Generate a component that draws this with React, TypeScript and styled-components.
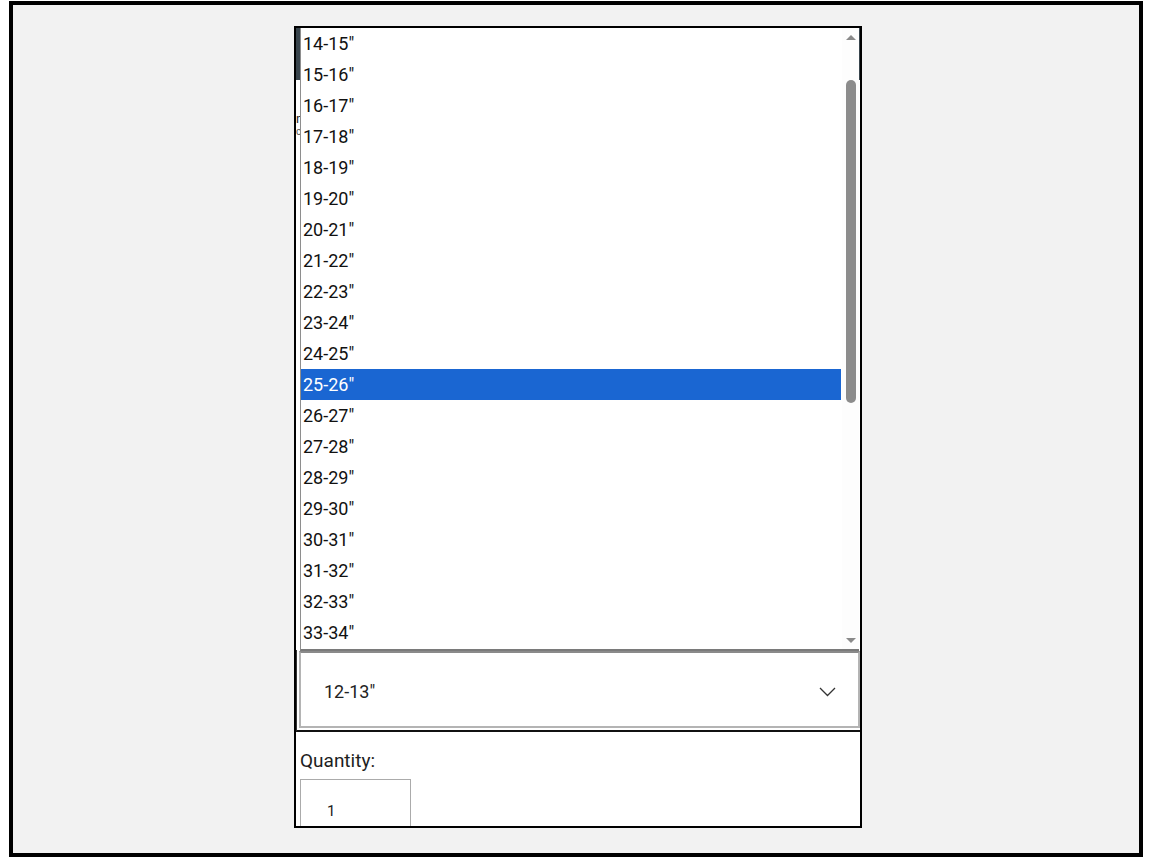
import React from 'react'
import styled, { createGlobalStyle } from 'styled-components'

const GlobalStyle = createGlobalStyle`
  html, body {
    margin: 0;
    padding: 0;
    background: #ffffff;
  }
  body {
    font-family: Roboto, "Noto Sans", "Liberation Sans", sans-serif;
    color: #111;
  }
`

const Screen = styled.div`
  width: 1152px;
  height: 864px;
  padding: 1px 0 0 9px;
  box-sizing: border-box;
`

const Frame = styled.div`
  width: 1134px;
  height: 856px;
  box-sizing: border-box;
  border: 4px solid #000;
  background: #f2f2f2;
  padding: 21px 0 0 281px;
`

const Phone = styled.div`
  position: relative;
  width: 568px;
  height: 802px;
  box-sizing: border-box;
  border: 2px solid #000;
  background: #fff;
  overflow: hidden;
  display: flex;
  flex-direction: column;
`

const Backdrop = styled.div`
  height: 622px;
  flex: none;
  display: flex;
  flex-direction: column;
`

const ProductImage = styled.div`
  height: 52px;
  background: #38444c;
`

const Title = styled.div`
  margin-top: 34px;
  font-size: 13px;
  line-height: 10px;
  color: #222;
`

const Sub = styled.div`
  margin-top: 3px;
  font-size: 10px;
  line-height: 9px;
  color: #555;
`

const ListBox = styled.div`
  position: absolute;
  top: 0;
  left: 4px;
  width: 559px;
  height: 623px;
  box-sizing: border-box;
  background: #fff;
  border-left: 1px solid #8e8e8e;
  border-bottom: 2px solid #7a7a7a;
  display: flex;
  overflow: hidden;
`

const Options = styled.ul`
  list-style: none;
  margin: 0;
  padding: 0;
  flex: 1;
`

const Option = styled.li<{ $selected?: boolean }>`
  height: 31px;
  line-height: 31px;
  padding-left: 2px;
  font-size: 18px;
  color: ${p => (p.$selected ? '#fff' : '#111')};
  background: ${p => (p.$selected ? '#1a66d2' : 'transparent')};
  white-space: nowrap;
`

const Track = styled.div`
  width: 17px;
  flex: none;
  display: flex;
  flex-direction: column;
  align-items: center;
  background: #fdfdfd;
  margin-left: 1px;
`

const ArrowBox = styled.div`
  height: 18px;
  width: 100%;
  display: flex;
  align-items: center;
  justify-content: center;
`

const Arrow = styled.div<{ $down?: boolean }>`
  width: 0;
  height: 0;
  border-left: 5px solid transparent;
  border-right: 5px solid transparent;
  ${p =>
    p.$down
      ? 'border-top: 5px solid #8a8a8a;'
      : 'border-bottom: 5px solid #8a8a8a;'}
`

const Thumb = styled.div`
  width: 10px;
  height: 323px;
  margin-top: 34px;
  border-radius: 5px;
  background: #8c8c8c;
`

const Spacer = styled.div`
  flex: 1;
`

const SelectWrap = styled.div`
  flex: none;
  border-left: 1px solid #333;
  border-bottom: 2px solid #111;
  padding: 1px 0 2px 2px;
`

const Select = styled.div`
  height: 77px;
  box-sizing: border-box;
  border: 2px solid #b4b4b4;
  border-top-color: #8a8a8a;
  display: flex;
  align-items: center;
  justify-content: space-between;
  padding: 4px 22px 0 23px;
  font-size: 18px;
  color: #222;
`

const Label = styled.div`
  margin: 19px 0 0 4px;
  font-size: 19px;
  line-height: 20px;
  color: #1e1e1e;
`

const QtyInput = styled.div`
  margin: 8px 0 0 4px;
  width: 111px;
  height: 60px;
  flex: none;
  box-sizing: border-box;
  border: 1px solid #ababab;
  padding: 22px 0 0 26px;
  font-size: 15px;
  color: #222;
`

const sizes = Array.from({ length: 20 }, (_, i) => `${i + 14}-${i + 15}"`)

export default function App() {
  return (
    <>
      <GlobalStyle />
      <Screen>
        <Frame>
          <Phone>
            <Backdrop>
              <ProductImage />
              <Title>n</Title>
              <Sub>c</Sub>
            </Backdrop>
            <SelectWrap>
              <Select>
                <span>12-13"</span>
                <svg width="17" height="10" viewBox="0 0 17 10">
                  <polyline
                    points="1,1 8.5,8.5 16,1"
                    fill="none"
                    stroke="#333"
                    strokeWidth="1.3"
                  />
                </svg>
              </Select>
            </SelectWrap>
            <Label>Quantity:</Label>
            <QtyInput>1</QtyInput>

            <ListBox>
              <Options>
                {sizes.map(s => (
                  <Option key={s} $selected={s === '25-26"'}>
                    {s}
                  </Option>
                ))}
              </Options>
              <Track>
                <ArrowBox>
                  <Arrow />
                </ArrowBox>
                <Thumb />
                <Spacer />
                <ArrowBox>
                  <Arrow $down />
                </ArrowBox>
              </Track>
            </ListBox>
          </Phone>
        </Frame>
      </Screen>
    </>
  )
}
